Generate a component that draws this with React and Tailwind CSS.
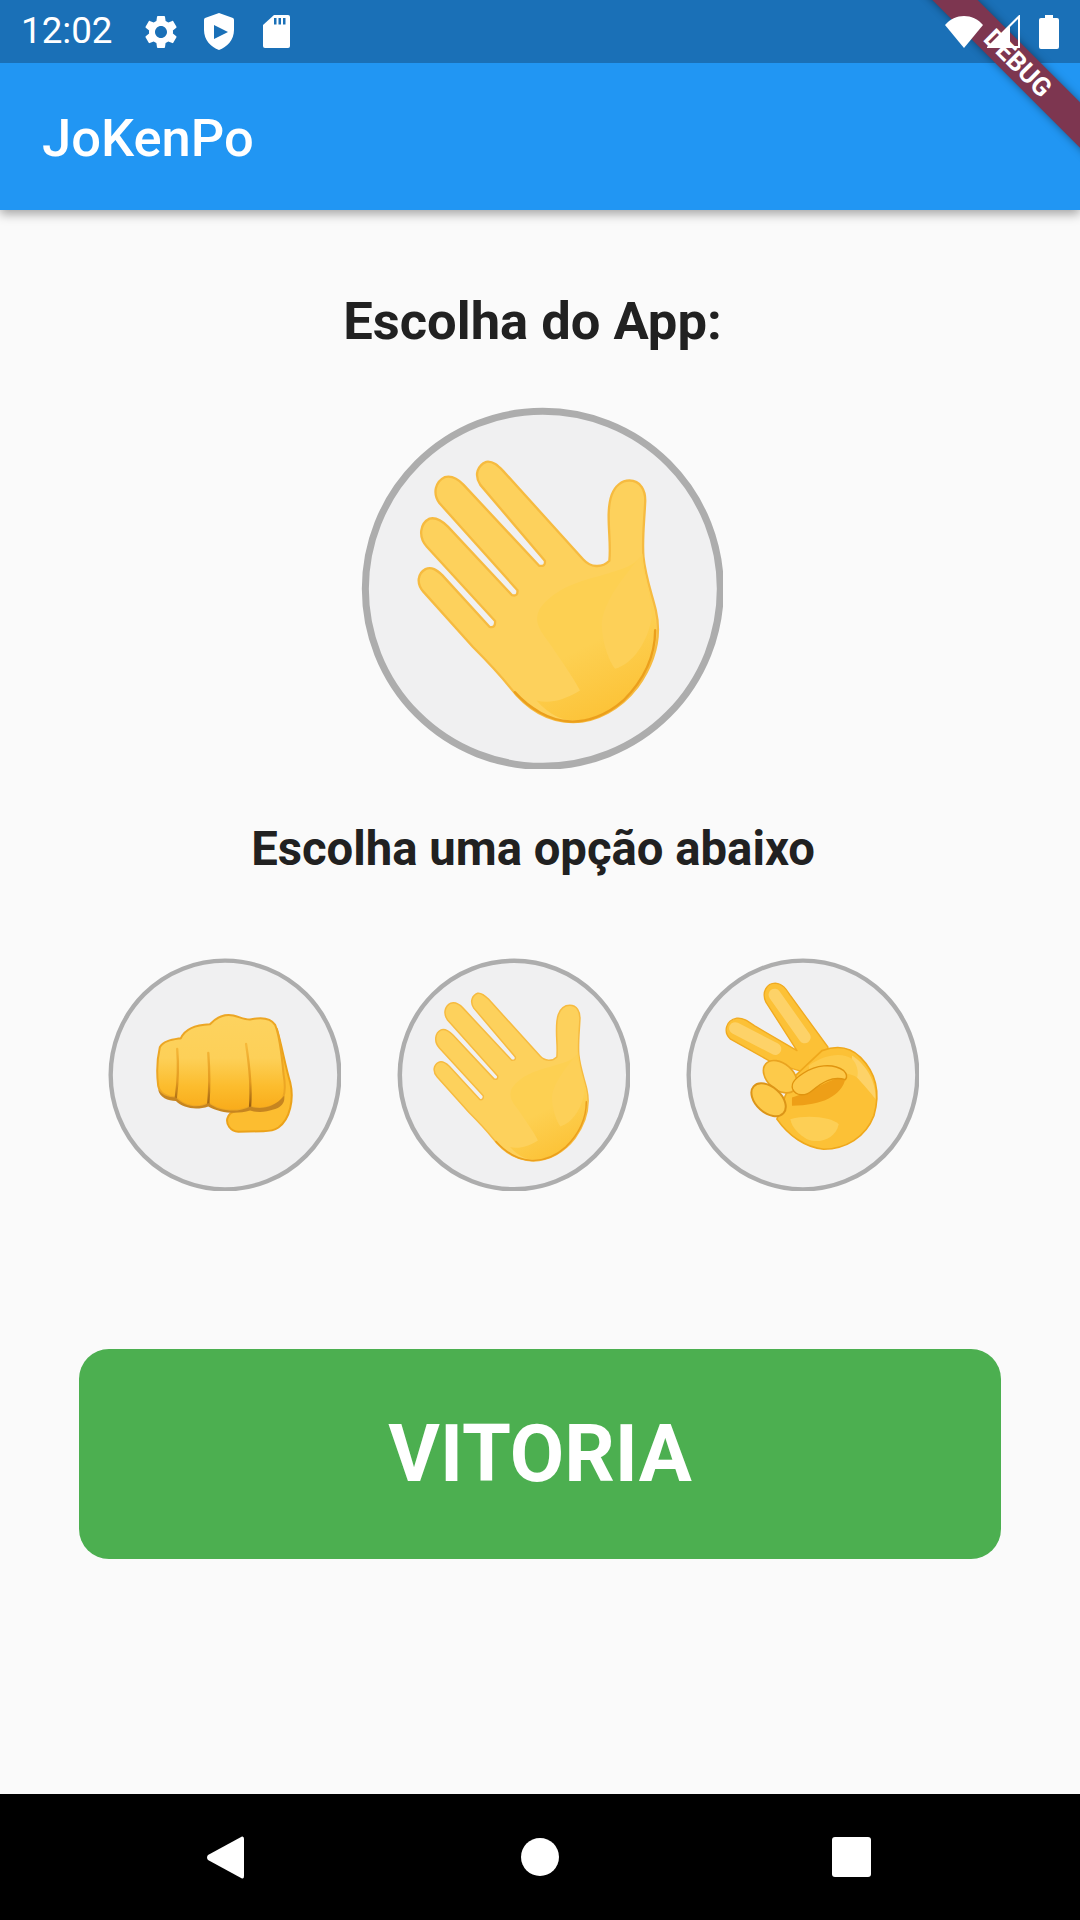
const Wave = ({ className }) => (
  <svg viewBox="35 22 1083 1083" className={className}>
    <defs>
      <linearGradient id="waveShade" gradientUnits="userSpaceOnUse" x1="660" y1="760" x2="760" y2="960">
        <stop offset="0" stopColor="#fdd052" />
        <stop offset="1" stopColor="#fcc236" />
      </linearGradient>
    </defs>
    <circle cx="579" cy="566" r="531" fill="#f0f0f1" stroke="#adadad" strokeWidth="21" />
    <path
      d="M838 242 C870 242 888 270 885 310 C882 370 876 420 880 470 C886 530 905 580 917 630 C935 710 912 790 862 860 C812 925 740 965 670 965 C590 965 530 925 480 860 C440 810 400 770 370 740 L222 575 C200 550 204 520 228 507 C246 498 262 510 278 525 L420 680 Q438 684 436 662 L232 440 C205 410 212 370 240 356 C262 350 280 365 295 380 L487 585 Q505 590 503 570 L270 310 C248 280 258 245 285 232 C310 225 328 240 342 255 L568 497 Q588 500 585 482 L392 255 C372 225 385 195 410 186 C430 183 445 198 460 213 L700 478 C722 502 755 505 778 482 C785 420 765 340 785 285 C795 258 815 242 838 242 Z"
      fill="#fdd15c"
      stroke="#f6bb40"
      strokeWidth="7"
      strokeLinejoin="round"
    />
    <path
      d="M740 530 C680 545 610 570 570 625 C550 665 570 690 600 730 C640 790 670 830 690 870 C640 900 600 910 560 900 C600 945 640 960 670 960 C740 960 810 920 858 856 C905 790 930 710 912 632 C900 580 882 530 877 460 C860 500 800 510 740 530 Z"
      fill="url(#waveShade)"
    />
    <path
      d="M870 470 C830 520 760 600 755 670 C755 720 775 780 795 805 C850 790 895 720 905 650 C905 590 880 520 870 470 Z"
      fill="#fdd058"
    />
    <path
      d="M915 690 C915 770 880 840 820 900 C770 945 710 965 660 963 C600 960 540 925 495 875"
      fill="none"
      stroke="#eb9f1c"
      strokeWidth="7"
      strokeLinecap="round"
    />
  </svg>
);

const Fist = ({ className }) => (
  <svg viewBox="25 28 697 697" className={className}>
    <defs>
      <linearGradient id="fistFill" x1="0" y1="0" x2="0" y2="1">
        <stop offset="0" stopColor="#fdd35f" />
        <stop offset="0.45" stopColor="#fdd058" />
        <stop offset="0.75" stopColor="#fcbc2d" />
        <stop offset="1" stopColor="#f9ab1a" />
      </linearGradient>
      <linearGradient id="fistLine" gradientUnits="userSpaceOnUse" x1="0" y1="290" x2="0" y2="470">
        <stop offset="0" stopColor="#f6b93a" />
        <stop offset="0.6" stopColor="#e39a1f" />
        <stop offset="1" stopColor="#9a5f12" />
      </linearGradient>
    </defs>
    <circle cx="375" cy="378" r="342" fill="#f0f0f1" stroke="#adadad" strokeWidth="13" />
    <path
      d="M530 240 C545 290 555 350 570 400 C582 450 570 510 535 535 C520 545 505 546 490 546 L415 548 C390 546 378 525 382 508 C385 495 395 488 410 484 L480 440 Z"
      fill="#fcbd30"
      stroke="#eba21a"
      strokeWidth="6"
      strokeLinejoin="round"
    />
    <path
      d="M180 295 C190 275 220 272 243 268 C255 240 285 228 330 226 C350 205 375 195 400 200 C420 205 435 213 450 212 C480 205 510 205 525 228 C540 265 545 320 550 375 C558 420 555 450 535 462 C500 480 470 480 450 472 C420 490 360 490 325 462 C300 478 255 475 228 445 C205 445 180 435 175 410 C170 370 172 330 180 295 Z"
      fill="url(#fistFill)"
      stroke="#eca624"
      strokeWidth="6"
      strokeLinejoin="round"
    />
    <path d="M232 300 C236 350 234 400 228 445 M325 312 C329 370 329 420 325 464 M438 285 C448 350 455 410 450 472" fill="none" stroke="url(#fistLine)" strokeWidth="7" strokeLinecap="round" />
    <path d="M175 420 C185 438 205 445 228 445 C255 475 300 478 325 462 C360 490 420 490 450 472 C480 482 520 478 552 440 C555 460 545 472 525 480 C490 492 470 490 450 484 C410 496 360 492 325 472 C290 484 250 478 228 456 C205 456 178 445 175 420 Z" fill="#c68520" />
  </svg>
);

const Peace = ({ className }) => (
  <svg viewBox="33 28 697 697" className={className}>
    <circle cx="383" cy="378" r="342" fill="#f0f0f1" stroke="#adadad" strokeWidth="13" />
    <path
      d="M290 340 L165 270 C145 250 150 215 185 208 C205 206 220 218 240 232 L365 305 L272 160 C258 130 275 103 300 103 C325 105 335 125 345 140 L458 295 L420 380 Z"
      fill="#fcc136"
      stroke="#f0aa20"
      strokeWidth="4"
      strokeLinejoin="round"
    />
    <path d="M180 238 L300 300 M298 138 L388 265" stroke="#fdd268" strokeWidth="36" strokeLinecap="round" />
    <path
      d="M440 305 C480 290 520 290 555 325 C600 370 615 430 595 500 C570 565 510 600 445 600 C390 595 340 560 305 510 L330 440 L360 380 Z"
      fill="#fcc136"
      stroke="#efa81c"
      strokeWidth="5"
    />
    <path d="M530 320 C575 350 602 400 600 450 C585 430 555 395 525 365 Z" fill="#fdd268" />
    <path d="M345 510 C400 495 470 505 490 525 C480 570 430 585 395 570 C370 555 350 535 345 510 Z" fill="#fdcf55" />
    <path d="M400 350 C450 315 500 310 530 330 C545 345 550 370 545 385 C500 360 450 375 410 420 Z" fill="#fdcb4b" />
    <path d="M350 445 C420 425 470 380 510 388 C500 440 440 470 350 470 Z" fill="#ee9f17" />
    <ellipse cx="315" cy="383" rx="58" ry="39" transform="rotate(42 315 383)" fill="#fdca4a" stroke="#eaa420" strokeWidth="5" />
    <ellipse cx="280" cy="452" rx="60" ry="38" transform="rotate(42 280 452)" fill="#fdca4a" stroke="#dc9518" strokeWidth="6" />
    <path
      d="M352 420 C345 400 365 385 385 372 C420 350 470 340 505 365 C515 375 515 385 510 392 C470 380 440 400 410 425 C390 442 362 442 352 420 Z"
      fill="#fdc94a"
      stroke="#e0940f"
      strokeWidth="4"
    />
  </svg>
);

export default function App() {
  return (
    <div
      className="relative w-[1080px] h-[1920px] overflow-hidden flex flex-col bg-[#fafafa]"
      style={{ fontFamily: "Roboto, 'Liberation Sans', sans-serif" }}
    >
      <header className="relative shadow-[0_4px_10px_rgba(0,0,0,0.35)]">
        <div className="h-[63px] bg-[#1a70b7] flex items-center text-white pl-[21px] pr-[21px]">
          <span className="text-[36.75px] leading-none font-normal">12:02</span>
          <svg viewBox="0 0 24 24" className="w-[40px] h-[40px] ml-[28px]" fill="#fff">
            <path d="M19.14 12.94c.04-.3.06-.61.06-.94 0-.32-.02-.64-.07-.94l2.03-1.58c.18-.14.23-.41.12-.61l-1.92-3.32c-.12-.22-.37-.29-.59-.22l-2.39.96c-.5-.38-1.03-.7-1.62-.94l-.36-2.54c-.04-.24-.24-.41-.48-.41h-3.84c-.24 0-.43.17-.47.41l-.36 2.54c-.59.24-1.13.57-1.62.94l-2.39-.96c-.22-.08-.47 0-.59.22L2.74 8.87c-.12.21-.08.47.12.61l2.03 1.58c-.05.3-.09.63-.09.94s.02.64.07.94l-2.03 1.58c-.18.14-.23.41-.12.61l1.92 3.32c.12.22.37.29.59.22l2.39-.96c.5.38 1.03.7 1.62.94l.36 2.54c.05.24.24.41.48.41h3.84c.24 0 .44-.17.47-.41l.36-2.54c.59-.24 1.13-.56 1.62-.94l2.39.96c.22.08.47 0 .59-.22l1.92-3.32c.12-.22.07-.47-.12-.61l-2.01-1.58zM12 15.6c-1.98 0-3.6-1.62-3.6-3.6s1.62-3.6 3.6-3.6 3.6 1.62 3.6 3.6-1.62 3.6-3.6 3.6z" />
          </svg>
          <svg viewBox="0 0 30 37" className="w-[30px] h-[37px] ml-[23px]" fill="#fff">
            <path
              fillRule="evenodd"
              d="M15 0 L29 5 Q30 5.4 30 7 V17 C30 27 23 34 15 37 C7 34 0 27 0 17 V7 Q0 5.4 1 5 Z M10 12 V26 L24 19 Z"
            />
          </svg>
          <svg viewBox="0 0 27 33" className="w-[27px] h-[33px] ml-[29px]">
            <path fill="#fff" d="M11 0 H25 a2 2 0 0 1 2 2 V31 a2 2 0 0 1 -2 2 H2 a2 2 0 0 1 -2 -2 V10 Z" />
            <path fill="#1a70b7" d="M11 3h2.5v6.5H11zM15.5 3H18v6.5h-2.5zM20 3h2.5v6.5H20z" />
          </svg>
          <div className="relative z-30 ml-auto flex items-center">
            <svg viewBox="0 0 38 32" className="w-[38px] h-[32px]" fill="#fff">
              <path d="M0 9 C10 -3 28 -3 38 9 L19 32 Z" />
            </svg>
            <svg viewBox="0 0 33 33" className="w-[33px] h-[33px] ml-[4px]">
              <path d="M32 1.5 V32 H1.5 Z" fill="none" stroke="#fff" strokeWidth="2" />
              <path d="M0 33 L23 10 V33 Z" fill="#fff" />
            </svg>
            <svg viewBox="0 0 20 34" className="w-[20px] h-[34px] ml-[19px]" fill="#fff">
              <path d="M6 0 H14 V3 H18 a2 2 0 0 1 2 2 V32 a2 2 0 0 1 -2 2 H2 a2 2 0 0 1 -2 -2 V5 a2 2 0 0 1 2 -2 H6 Z" />
            </svg>
          </div>
        </div>
        <div className="h-[147px] bg-[#2196f3] flex items-center pl-[42px] pt-[4px]">
          <h1 className="text-[52.5px] leading-none font-medium text-white">JoKenPo</h1>
        </div>
      </header>

      <div
        aria-hidden="true"
        className="absolute z-20 left-[868px] top-[47px] w-[300px] h-[32px] rotate-45 bg-[#7d3650] shadow-[0_0_8px_rgba(0,0,0,0.4)] flex items-center justify-center text-white text-[26px] font-bold leading-none"
      >
        DEBUG
      </div>

      <main className="flex-1 flex flex-col">
        <h2 className="mt-[81px] h-[60px] pr-[15px] flex items-center justify-center text-[52.5px] font-bold text-[#212121]">
          Escolha do App:
        </h2>
        <div className="mt-[56px] flex justify-center pl-[4px]">
          <Wave className="w-[362px] h-[362px] blur-[0.6px]" />
        </div>
        <h2 className="mt-[50px] h-[60px] pr-[14px] flex items-center justify-center text-[47.25px] font-bold text-[#212121]">
          Escolha uma opção abaixo
        </h2>
        <div className="mt-[79px] flex pl-[108px] gap-[56px]">
          <Fist className="w-[233px] h-[233px] blur-[0.6px]" />
          <Wave className="w-[233px] h-[233px] blur-[0.6px]" />
          <Peace className="w-[233px] h-[233px] blur-[0.6px]" />
        </div>
        <div className="mt-[158px] mx-[79px] h-[210px] rounded-[30px] bg-[#4caf50] flex items-center justify-center">
          <span className="text-[79px] font-bold text-white leading-none">VITORIA</span>
        </div>
      </main>

      <nav className="h-[126px] bg-black flex items-center justify-between pl-[207px] pr-[209px]">
        <svg viewBox="0 0 37 43" className="w-[37px] h-[43px]" fill="#fff">
          <path d="M35 0.5 Q37 0 37 3 V40 Q37 43 35 42.5 L1 24 Q-1 21.5 1 19 Z" />
        </svg>
        <div className="w-[38px] h-[38px] ml-[4px] rounded-full bg-white" />
        <div className="w-[39px] h-[40px] rounded-[3px] bg-white" />
      </nav>
    </div>
  );
}
